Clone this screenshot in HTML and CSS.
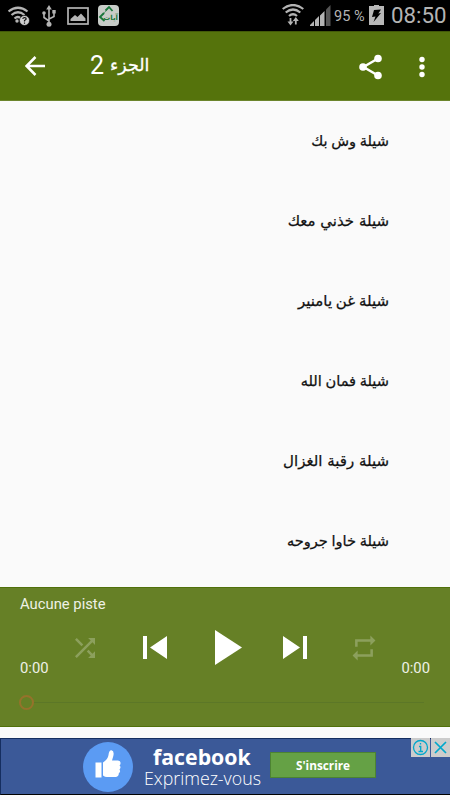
FILE: index.html
```html
<!DOCTYPE html>
<html lang="ar">
<head>
  <meta charset="UTF-8">
  <meta name="viewport" content="width=device-width, initial-scale=1.0">
  <title>الجزء 2</title>
  <link rel="stylesheet" href="styles.css">
</head>
<body>
  <div class="status-bar">
    <div class="status-left">
      <svg width="22" height="20" viewBox="0 0 22 20" fill="none" stroke="#b4b4b4" stroke-width="2.200">
        <path d="M.5 5.500Q10 -2 19.500 5.500M3.500 9Q10 3.500 16.500 9M6.500 12.500Q10 9.500 13 12.500"/>
        <circle cx="9" cy="15" r="1.700" fill="#b4b4b4" stroke="none"/>
        <circle cx="16.500" cy="14.500" r="5" fill="#d0d0d0" stroke="#000" stroke-width=".6"/>
        <path d="M14.800 13Q15 11.500 16.500 11.500Q18.300 11.600 18.100 13.200Q17.500 14 16.500 14.600V15.600M16.500 16.500V17.700" stroke="#111" stroke-width="1.200"/>
      </svg>
      <svg width="14" height="22" viewBox="0 0 14 22" fill="none" stroke="#b4b4b4" stroke-width="1.600">
        <path d="M7 3V20M7 16L2 12.500V8M7 14L12 11.500V7"/>
        <path d="M7 0L9.800 4.500H4.200Z" fill="#b4b4b4" stroke="none"/>
        <circle cx="7" cy="19.300" r="2.500" fill="#b4b4b4" stroke="none"/>
        <circle cx="2" cy="8" r="1.800" fill="#b4b4b4" stroke="none"/>
        <path d="M10.300 5H13.700V8.500H10.300Z" fill="#b4b4b4" stroke="none"/>
      </svg>
      <svg width="22" height="18" viewBox="0 0 22 18">
        <rect x="1" y="1" width="20" height="16" fill="none" stroke="#b4b4b4" stroke-width="1.700"/>
        <path d="M3.500 14V12L8 8L10.500 10L14 6.500L18.500 11.500V14Z" fill="#b4b4b4"/>
      </svg>
      <div class="app-icon">
        <svg width="21" height="21" viewBox="0 0 21 21" fill="none">
          <path d="M6.500 16L2 12L6 8M7.500 5.500L11 2L14.500 6" stroke="#18763a" stroke-width="1.800"/>
          <path d="M5 9.500L9 4.500" stroke="#18763a" stroke-width="1" stroke-dasharray="1.500 1"/>
        </svg>
        <span>آيات</span>
      </div>
    </div>
    <div class="status-right">
      <svg class="wifi" width="22" height="22" viewBox="0 0 22 22" fill="none" stroke="#b4b4b4" stroke-width="2.200">
        <path d="M.7 5Q11 -3 21.300 5M3.700 8.500Q11 2.500 18.300 8.500M7 12Q11 8.500 15 12"/>
        <path d="M8.500 14V19M13.800 20.500V16" stroke-width="1.800"/>
        <path d="M5.500 17.500H11.500L8.500 21.500ZM10.800 17H16.800L13.800 13Z" fill="#b4b4b4" stroke="none"/>
      </svg>
      <svg class="signal" width="21" height="21" viewBox="0 0 21 21" fill="#b4b4b4">
        <path d="M0 21V20L4 16V21ZM5 21V15L9 11V21ZM10 21V10.500L14.500 6V21Z"/>
        <path d="M16 21V4.500L20.500 0V21Z" fill="#555"/>
      </svg>
      <span class="percent">95 %</span>
      <svg class="battery" width="15" height="20" viewBox="0 0 15 20">
        <path d="M5 0H10V1H15V20H0V1H5Z" fill="#b8b8b8"/>
        <path d="M5 5L12 4.500L9.300 8.500L12 8L4.500 17L6.500 11.500L3 12Z" fill="#000"/>
      </svg>
      <span class="clock">08:50</span>
    </div>
  </div>

  <header class="toolbar">
    <svg class="back" width="20" height="20" viewBox="0 0 20 20" fill="none" stroke="#fff" stroke-width="2.500">
      <path d="M20 10H2M10.500 1L1.600 10L10.500 19"/>
    </svg>
    <h1 class="title"><span class="title-number">2</span> <span class="title-text">الجزء</span></h1>
    <svg class="share" width="24" height="26" viewBox="0 0 24 26" fill="#fff">
      <path d="M19 4.500L4.500 13L19 21.500" fill="none" stroke="#fff" stroke-width="2.500"/>
      <circle cx="19" cy="4.500" r="3.800"/><circle cx="4" cy="13" r="3.800"/><circle cx="19" cy="21.500" r="3.800"/>
    </svg>
    <svg class="more" width="6" height="22" viewBox="0 0 6 22" fill="#fff">
      <circle cx="3" cy="3.500" r="2.700"/><circle cx="3" cy="11" r="2.700"/><circle cx="3" cy="18.500" r="2.700"/>
    </svg>
  </header>

  <ul class="tracks" dir="rtl">
    <li class="tight">شيلة وش بك</li>
    <li>شيلة خذني معك</li>
    <li class="snug">شيلة غن يامنير</li>
    <li class="tight">شيلة فمان الله</li>
    <li>شيلة رقبة الغزال</li>
    <li class="tight">شيلة خاوا جروحه</li>
  </ul>

  <div class="player">
    <div class="now-playing">Aucune piste</div>
    <div class="controls">
      <span class="time">0:00</span>
      <div class="buttons">
        <svg class="dim" width="30" height="30" viewBox="0 0 24 24" fill="#fff"><path d="M10.590 9.170L5.410 4 4 5.410l5.170 5.170 1.420-1.410zM14.500 4l2.040 2.040L4 18.590 5.410 20 17.960 7.460 20 9.500V4h-5.500zm.33 9.410l-1.410 1.410 3.130 3.130L14.500 20H20v-5.500l-2.040 2.040-3.130-3.130z"/></svg>
        <svg class="previous" width="24" height="23" viewBox="0 0 24 23" fill="#fff"><path d="M0 0H4V23H0ZM24 0V23L7 11.500Z"/></svg>
        <svg class="play" width="27" height="35" viewBox="0 0 27 35" fill="#fff"><path d="M0 0L27 17.500L0 35Z"/></svg>
        <svg class="next" width="24" height="23" viewBox="0 0 24 23" fill="#fff"><path d="M20 0H24V23H20ZM0 0V23L17 11.500Z"/></svg>
        <svg class="dim repeat" width="28" height="30" viewBox="1 0 22 24" preserveAspectRatio="none" fill="#fff"><path d="M7 7h10v3l4-4-4-4v3H5v6h2V7zm10 10H7v-3l-4 4 4 4v-3h12v-6h-2v4z"/></svg>
      </div>
      <span class="time">0:00</span>
    </div>
    <div class="seek"><span class="thumb"></span><span class="line"></span></div>
  </div>

  <div class="ad">
    <svg class="like" width="50" height="50" viewBox="0 0 50 50">
      <circle cx="25" cy="25" r="25" fill="#5b9bf3"/>
      <path d="M12.500 20.500H18.500V35.500H12.500Z" fill="#fff"/>
      <path d="M20 20.500Q25 17 25.500 13Q26 8 28.500 8.300Q31.500 9 30.300 14L29 18.500H35Q38 19 37.500 21.500Q37.400 23 36.500 23.500Q38.500 25 36.500 27.500Q38 30 35.800 31.200Q36 34.500 33 35H24Q22 35 20 33.500Z" fill="#fff"/>
    </svg>
    <div class="ad-text">
      <strong>facebook</strong>
      <span>Exprimez-vous</span>
    </div>
    <button class="signup">S'inscrire</button>
    <div class="ad-choices">
      <svg width="19" height="19" viewBox="0 0 19 19" fill="none" stroke="#00a8cc" stroke-width="1.300">
        <circle cx="9.500" cy="9.500" r="7"/><path d="M8 8.500H9.700V13.500M7.500 13.500H12M9.500 5V6.500" />
      </svg>
      <svg width="19" height="19" viewBox="0 0 19 19" fill="none" stroke="#00a8cc" stroke-width="1.700">
        <path d="M4 4L15 15M15 4L4 15"/>
      </svg>
    </div>
  </div>
</body>
</html>
```

FILE: styles.css
```css
* {
  box-sizing: border-box; }
body {
  margin: 0; width: 450px; height: 800px; overflow: hidden; background: #fafafa;
  font-family: Roboto, "DejaVu Sans", sans-serif; }
svg {
  display: block; flex: none; }
.status-bar {
  height: 31px; background: #000; color: #b4b4b4; display: flex; justify-content: space-between; }
.status-left {
  display: flex; align-items: center; padding-left: 8px; }
.status-left svg + svg {
  margin-left: 12px; }
.status-left svg:nth-child(3) {
  margin-left: 11px; }
.app-icon {
  width: 21px; height: 21px; margin-left: 9px; border-radius: 4px; background: #c8ccc8;
  position: relative; }
.app-icon span {
  position: absolute; right: 1px; top: 8px; color: #18763a;
  font: bold 7px/10px "DejaVu Sans", sans-serif; }
.status-right {
  display: flex; align-items: flex-start; padding-right: 4px; white-space: nowrap; }
.wifi {
  margin-top: 4px; }
.signal {
  margin: 5px 0 0 6px; }
.percent {
  font-size: 14.5px; line-height: 31px; margin: 1px 0 0 3px; width: 31px; }
.battery {
  margin: 5px 0 0 4px; }
.clock {
  font-size: 22.3px; line-height: 31px; margin-left: 7px; width: 55px; }
.toolbar {
  height: 70px; background: #55730c; border-top: 1px solid #425a09; border-bottom: 1px solid #6b852c;
  display: flex; align-items: center; padding: 0 25px; }
.title {
  margin: 0 auto 0 45px; color: #fff; font-weight: normal; display: flex; align-items: center;
  gap: 6px; direction: ltr; }
.title-number {
  font-size: 25px; line-height: 30px; }
.title-text {
  font: 17.5px/30px "DejaVu Sans", sans-serif; padding-bottom: 2px;
  -webkit-text-stroke: .3px #fff; }
.share {
  margin-top: 1px; }
.more {
  margin: 1px 0 0 36px; }
.tracks {
  height: 486px; margin: 0; padding: 0 61px 0 0; list-style: none; overflow: hidden;
  font: 15px/80px "DejaVu Sans", sans-serif; color: #111; -webkit-text-stroke: .25px #111; }
.tracks li {
  height: 80px; }
.tracks .snug {
  word-spacing: -1px; }
.tracks .tight {
  font-size: 14.6px; word-spacing: -1px; }
.player {
  height: 140px; background: #668026; color: #eef1e6; font-size: 14.8px;
  border-top: 1px solid #50700a; border-bottom: 1px solid #50700a; }
.now-playing {
  padding: 7px 20px 0; line-height: 18px; }
.controls {
  height: 70px; padding: 0 20px; display: flex; align-items: flex-end; justify-content: space-between; }
.time {
  line-height: 18px; padding-bottom: 6px; }
.buttons {
  height: 70px; display: flex; align-items: center; width: 310px; padding-bottom: 1px; }
.previous {
  margin-left: 43px; }
.play {
  margin-left: 48px; }
.next {
  margin-left: 41px; }
.repeat {
  margin-left: 43px; }
.dim {
  opacity: .25; }
.seek {
  display: flex; align-items: center; padding: 0 26px 0 19px; height: 38px; }
.thumb {
  width: 15px; height: 15px; border: 2px solid #96722b; border-radius: 50%; }
.line {
  flex: 1; height: 1px; background: #5c7727; }
.ad {
  height: 57px; margin-top: 11px; background: #3b5998; border-top: 1px solid #152e60;
  border-bottom: 1px solid #000; border-left: 1px solid #152e60; display: flex;
  align-items: center; padding-left: 82px; position: relative; color: #fff; }
.like {
  margin-top: 1px; }
.ad-text {
  display: flex; flex-direction: column; width: 118px; margin-left: 11px; white-space: nowrap; }
.ad-text strong {
  font: bold 21.3px/23px "Open Sans", sans-serif; padding-left: 9px; }
.ad-text span {
  font: 300 17.8px/21px "Open Sans", sans-serif; }
.signup {
  width: 106px; height: 26px; margin: 0 0 3px 8px; padding: 0; background: #65a145;
  border: 1px solid #4c8332; color: #fff; font: bold 11.8px/22px "Open Sans", sans-serif; }
.ad-choices {
  position: absolute; right: 0; top: -1px; display: flex; gap: 1px; }
.ad-choices svg {
  background: #ccc; }
```
